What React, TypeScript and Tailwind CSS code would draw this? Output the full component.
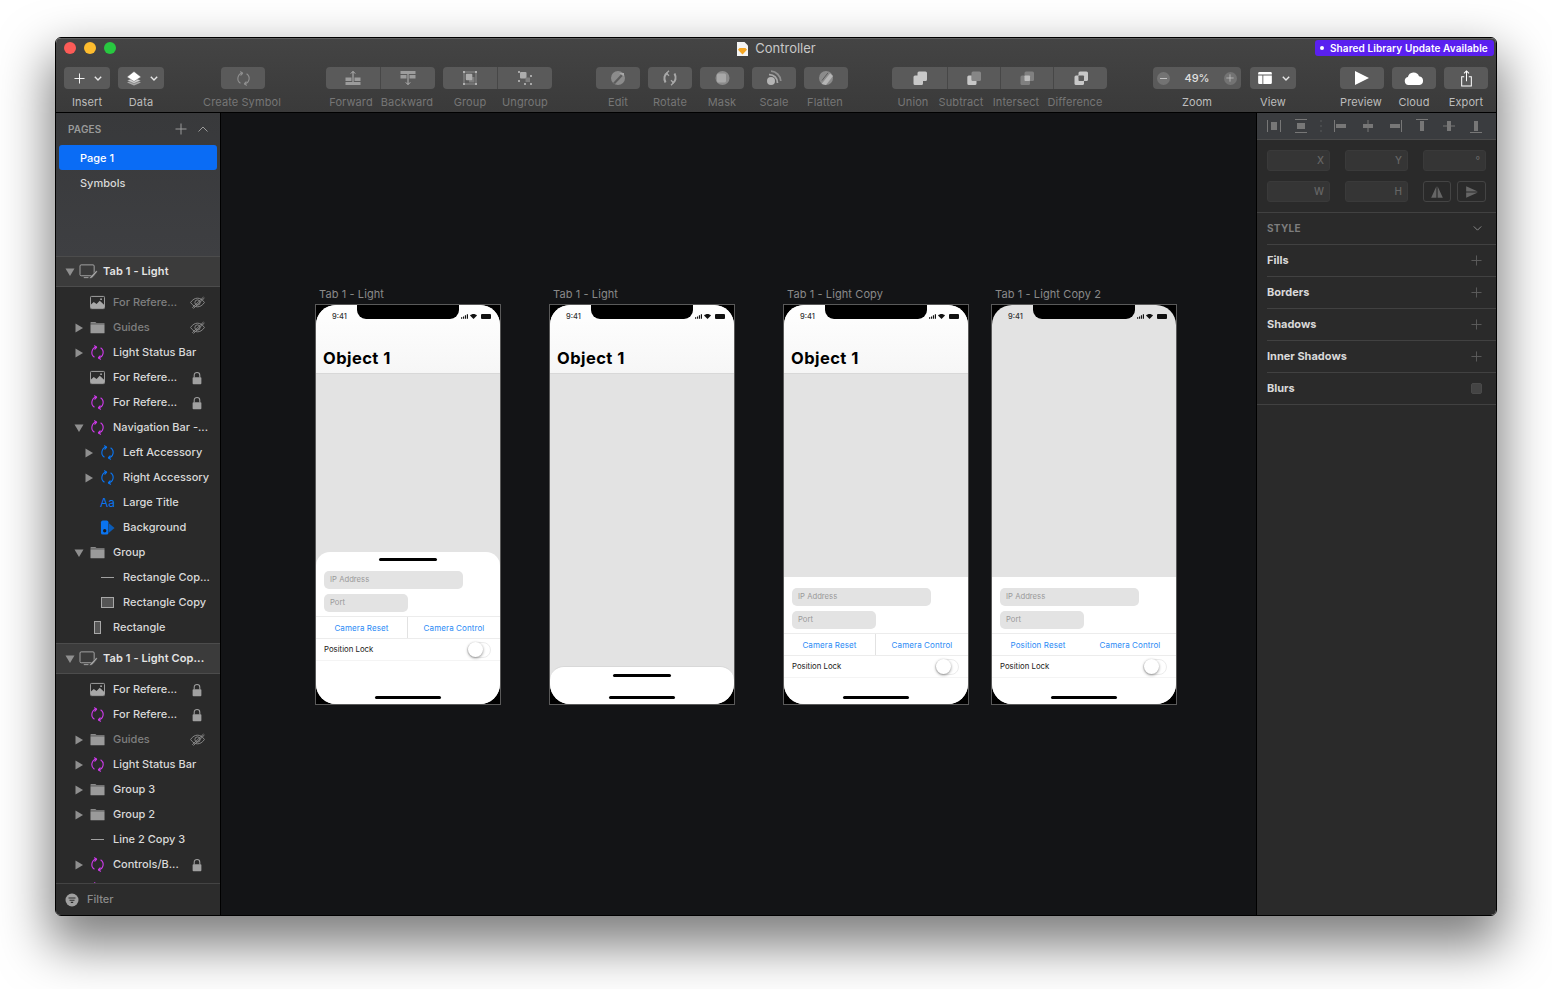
import type { ReactNode } from "react";

const font = { fontFamily: "Inter, 'Noto Sans', sans-serif" };

type IconProps = { className?: string };

const Svg = ({ className, children, box = "0 0 16 16" }: IconProps & { children: ReactNode; box?: string }) => (
  <svg viewBox={box} className={className} fill="none" stroke="none">
    {children}
  </svg>
);

/* layer list icons */
const SyncIcon = ({ className }: IconProps) => (
  <Svg className={className}>
    <g stroke="currentColor" strokeWidth="1.2" strokeLinecap="round" strokeLinejoin="round">
      <path d="M6.8 2.1A6 6 0 0 0 4.4 12.8" />
      <path d="M4.8.8 7 2.4 5.2 4.4" />
      <path d="M9.2 13.9A6 6 0 0 0 11.6 3.2" />
      <path d="M11.2 15.2 9 13.6 10.8 11.6" />
    </g>
  </Svg>
);
const ImageIcon = ({ className }: IconProps) => (
  <Svg className={className}>
    <rect x=".5" y="1.5" width="15" height="13" rx="1" fill="#2b2b2b" stroke="#a8a8a8" />
    <path d="M1 13.8V10l3-2.6 3 2.2 3.4-3.4L15 10.4v3.4z" fill="#a8a8a8" />
    <circle cx="11.8" cy="4.4" r="1" fill="#a8a8a8" />
  </Svg>
);
const FolderIcon = ({ className }: IconProps) => (
  <Svg className={className}>
    <path d="M.5 2.8c0-.5.3-.8.8-.8h4.4l1.2 1.2h8.3c.3 0 .3.2.3.4v.4H.5z" fill="#8a8a8a" />
    <path d="M.5 4.4h15v9.2c0 .4-.2.6-.6.6H1.1c-.4 0-.6-.2-.6-.6z" fill="#9a9a9a" />
  </Svg>
);
const EyeOffIcon = ({ className }: IconProps) => (
  <Svg className={className}>
    <g stroke="currentColor" strokeWidth="1">
      <path d="M.6 8C3 4.6 5.4 3.4 8 3.4s5 1.2 7.4 4.6C13 11.4 10.6 12.6 8 12.6S3 11.4.6 8z" />
      <circle cx="8" cy="8" r="2.8" />
      <path d="M2.4 13.6 14.4 2.2M3.6 14.4 15.4 3.2" />
    </g>
  </Svg>
);
const LockIcon = ({ className }: IconProps) => (
  <Svg className={className}>
    <path d="M4.8 7.5V4.8a3.2 3.2 0 0 1 6.4 0v2.7" stroke="#a0a0a0" strokeWidth="1.2" />
    <rect x="3" y="7" width="10" height="8" rx="1" fill="#a0a0a0" />
  </Svg>
);
const ArtboardIcon = ({ className }: IconProps) => (
  <Svg className={className} box="0 0 20 18">
    <rect x="1" y="2" width="15" height="11.5" rx="1.2" stroke="#a8a8a8" />
    <path d="M5 15.5h5" stroke="#a8a8a8" />
    <path d="M10.5 16c1-.4 1.3-2 2.4-2.6l5.3-5.4 1.3 1.2-4.8 5.500c-.7 1.3-2.4 1.8-4.200 1.300z" fill="#a8a8a8" stroke="#3b3b3b" strokeWidth=".6" />
  </Svg>
);
const ArrowRight = () => (
  <Svg className="h-[10px] w-[10px]" box="0 0 10 10">
    <path d="M1.5.5 9 5l-7.5 4.5z" fill="#8f8f8f" />
  </Svg>
);
const ArrowDown = () => (
  <Svg className="h-[10px] w-[10px]" box="0 0 10 10">
    <path d="M.5 1.5h9L5 9z" fill="#8f8f8f" />
  </Svg>
);
const BackgroundIcon = ({ className }: IconProps) => (
  <Svg className={className}>
    <path d="M9.5 3.5 15.5 8.5 9.5 13.5z" fill="#0b5cb8" />
    <rect x="1" y=".5" width="8" height="15" rx="2" fill="#0a74f0" />
    <circle cx="5" cy="11.5" r="1.8" fill="#1c1c1c" />
  </Svg>
);

const iconFor = (kind: string) => {
  const s = "h-[15px] w-[15px] shrink-0";
  switch (kind) {
    case "image":
      return <ImageIcon className={s} />;
    case "folder":
      return <FolderIcon className={s} />;
    case "symbol":
      return <SyncIcon className={`${s} text-[#cc3ae8]`} />;
    case "blue":
      return <SyncIcon className={`${s} text-[#0a74f0]`} />;
    case "text":
      return <span className="w-[15px] shrink-0 text-center text-[12px] leading-[15px] text-[#0a74f0]">Aa</span>;
    case "bg":
      return <BackgroundIcon className={s} />;
    case "line":
      return <span className="mx-[1px] h-[1px] w-[13px] shrink-0 self-center bg-[#a0a0a0]" />;
    case "rect":
      return <span className="mx-[1px] h-[11px] w-[13px] shrink-0 self-center border border-[#a8a8a8] bg-[#555]" />;
    case "tall":
      return <span className="mx-[4px] h-[13px] w-[7px] shrink-0 self-center border border-[#a8a8a8] bg-[#555]" />;
    default:
      return null;
  }
};

type Layer = { label: string; icon: string; depth?: number; arrow?: "r" | "d"; trail?: "eye" | "lock"; dim?: boolean };

const firstLayers: Layer[] = [
  { label: "For Refere...", icon: "image", trail: "eye", dim: true },
  { label: "Guides", icon: "folder", arrow: "r", trail: "eye", dim: true },
  { label: "Light Status Bar", icon: "symbol", arrow: "r" },
  { label: "For Refere...", icon: "image", trail: "lock" },
  { label: "For Refere...", icon: "symbol", trail: "lock" },
  { label: "Navigation Bar -...", icon: "symbol", arrow: "d" },
  { label: "Left Accessory", icon: "blue", depth: 1, arrow: "r" },
  { label: "Right Accessory", icon: "blue", depth: 1, arrow: "r" },
  { label: "Large Title", icon: "text", depth: 1 },
  { label: "Background", icon: "bg", depth: 1 },
  { label: "Group", icon: "folder", arrow: "d" },
  { label: "Rectangle Cop...", icon: "line", depth: 1 },
  { label: "Rectangle Copy", icon: "rect", depth: 1 },
  { label: "Rectangle", icon: "tall" },
];

const secondLayers: Layer[] = [
  { label: "For Refere...", icon: "image", trail: "lock" },
  { label: "For Refere...", icon: "symbol", trail: "lock" },
  { label: "Guides", icon: "folder", arrow: "r", trail: "eye", dim: true },
  { label: "Light Status Bar", icon: "symbol", arrow: "r" },
  { label: "Group 3", icon: "folder", arrow: "r" },
  { label: "Group 2", icon: "folder", arrow: "r" },
  { label: "Line 2 Copy 3", icon: "line" },
  { label: "Controls/B...", icon: "symbol", arrow: "r", trail: "lock" },
  { label: "", icon: "symbol", arrow: "r", trail: "lock" },
];

function LayerRow({ layer }: { layer: Layer }) {
  return (
    <div className="relative flex h-[25px] shrink-0 items-center">
      <div className={`flex w-[20px] justify-end ${layer.depth ? "ml-[24px]" : "ml-[14px]"}`}>
        <span className="mr-[6px] flex w-[10px]">
          {layer.arrow === "r" && <ArrowRight />}
          {layer.arrow === "d" && <ArrowDown />}
        </span>
      </div>
      <div className="flex w-[23px] shrink-0">{iconFor(layer.icon)}</div>
      <span className={`whitespace-nowrap text-[11px] font-medium ${layer.dim ? "text-[#7f7f7f]" : "text-[#d9d9d9]"}`}>
        {layer.label}
      </span>
      {layer.trail === "eye" && <EyeOffIcon className="absolute left-[134px] h-[15px] w-[15px] text-[#8a8a8a]" />}
      {layer.trail === "lock" && <LockIcon className="absolute left-[134px] h-[14px] w-[14px]" />}
    </div>
  );
}

function TabHeader({ label }: { label: string }) {
  return (
    <div className="flex h-[31px] shrink-0 items-center border-y border-[#4c4c4c] bg-[#3b3b3b] pl-[9px]">
      <ArrowDown />
      <ArtboardIcon className="ml-[4px] h-[17px] w-[19px]" />
      <span className="ml-[5px] whitespace-nowrap text-[11px] font-semibold tracking-[0.1px] text-[#e4e4e4]">{label}</span>
    </div>
  );
}

function Sidebar() {
  return (
    <aside className="flex w-[165px] shrink-0 flex-col border-r border-black bg-[#2a2a2a]">
      <div className="h-[143px] shrink-0 bg-gradient-to-b from-[#38393b] to-[#3e3f42] pt-[9px]">
        <div className="flex h-[14px] items-center justify-between px-[12px]">
          <span className="text-[10px] font-semibold tracking-[0.2px] text-[#9a9a9a]">PAGES</span>
          <div className="flex items-center gap-[11px]">
            <PlusIcon className="h-[12px] w-[12px] text-[#9a9a9a]" />
            <svg viewBox="0 0 10 6" className="h-[6px] w-[10px]" fill="none" stroke="#9a9a9a">
              <path d="M.5 5.5 5 1l4.500 4.500" />
            </svg>
          </div>
        </div>
        <div className="mx-[3px] mt-[9px] flex h-[25px] w-[158px] items-center rounded-[3px] bg-[#0a6cf5] pl-[21px] pt-[1px] text-[11px] font-medium text-white">
          Page 1
        </div>
        <div className="flex h-[25px] items-center pl-[24px] pt-[1px] text-[11px] font-medium text-[#d9d9d9]">Symbols</div>
      </div>
      <div className="flex min-h-0 flex-1 flex-col overflow-hidden">
        <TabHeader label="Tab 1 - Light" />
        <div className="flex flex-col pt-[3px]">
          {firstLayers.map((l, i) => (
            <LayerRow key={i} layer={l} />
          ))}
        </div>
        <div className="mt-[3px]">
          <TabHeader label="Tab 1 - Light Cop..." />
        </div>
        <div className="flex flex-col pt-[3px]">
          {secondLayers.map((l, i) => (
            <LayerRow key={i} layer={l} />
          ))}
        </div>
      </div>
      <div className="flex h-[32px] shrink-0 items-center border-t border-[#444] bg-[#2c2c2c] pl-[9px]">
        <svg viewBox="0 0 14 14" className="h-[14px] w-[14px]">
          <circle cx="7" cy="7" r="6.5" fill="#a0a0a0" />
          <path d="M3.5 5h7M4.5 7.2h5M5.8 9.4h2.4" stroke="#2c2c2c" strokeWidth="1.1" />
        </svg>
        <span className="ml-[8px] text-[11px] font-medium text-[#8a8a8a]">Filter</span>
      </div>
    </aside>
  );
}

/* toolbar icons */
const PlusIcon = ({ className }: IconProps) => (
  <Svg className={className} box="0 0 12 12">
    <path d="M6 .5v11M.5 6h11" stroke="currentColor" strokeWidth="1" />
  </Svg>
);
const Chevron = () => (
  <svg viewBox="0 0 8 5" className="h-[5px] w-[8px]" fill="none" stroke="#e6e6e6" strokeWidth="1.4">
    <path d="M.8.8 4 4 7.2.8" />
  </svg>
);
const g = "#9c9c9c";
const toolIcons: Record<string, ReactNode> = {
  data: (
    <>
      <path d="M8 9.5 15 12.5 8 15.5 1 12.5z" fill="#a8a8a8" />
      <path d="M8 7.5 15 10.5 8 13.5 1 10.5z" fill="#cfcfcf" stroke="#5c5c5c" strokeWidth=".5" />
      <path d="M8 1.5 15 7 8 11.5 1 7z" fill="#fff" stroke="#5c5c5c" strokeWidth=".5" />
    </>
  ),
  forward: (
    <>
      <path d="M.5 12h15v3H.5z" fill={g} />
      <path d="M.5 7.5h6V11h-6zM9.500 7.5h6V11h-6z" fill={g} />
      <path d="M8 12V1.5M5.8 3.6 8 1.400l2.200 2.200" stroke="#b5b5b5" />
    </>
  ),
  backward: (
    <>
      <path d="M.5 1h15v3H.5z" fill={g} />
      <path d="M.5 5h6v3.5h-6zM9.500 5h6v3.5h-6z" fill={g} />
      <path d="M8 4v10.5M5.8 12.4 8 14.6l2.200-2.200" stroke="#b5b5b5" />
    </>
  ),
  group: (
    <>
      <path d="M2 2h12v12H2z" stroke="#8c8c8c" />
      <path d="M1 1h2v2H1zM13 1h2v2h-2zM1 13h2v2H1zM13 13h2v2h-2z" fill="#b0b0b0" />
      <rect x="7" y="7" width="5.5" height="5.5" rx=".5" fill="#7d7d7d" />
      <rect x="3.8" y="3.8" width="6.5" height="6.5" rx="1" fill="#adadad" />
    </>
  ),
  ungroup: (
    <>
      <path d="M1 1h2v2H1zM13 5h2v2h-2zM1 10h2v2H1zM13 13h2v2h-2zM7 13h2v2H7z" fill="#a8a8a8" />
      <rect x="3" y="2" width="6.5" height="6.5" rx="1" fill="#adadad" />
      <rect x="8.5" y="7.5" width="4.5" height="4.5" rx=".5" fill="#7d7d7d" />
    </>
  ),
  edit: (
    <>
      <circle cx="8" cy="8" r="7" fill="#8b8b8b" />
      <path d="M3 13 11 4.5l1.600 1.500L5 14z" fill="#5c5c5c" />
      <path d="M9 3h5v3z" fill="#a8a8a8" />
    </>
  ),
  rotate: (
    <g stroke="#a8a8a8" strokeWidth="2" fill="none">
      <path d="M5.5 3C2.400 4.5 1.400 8.5 3.500 12.5" />
      <path d="M10.5 13c3.100-1.500 4.100-5.500 2-9.500" />
      <path d="M7 .8 4.500 3.200 7 5.700M9 15.200l2.500-2.400L9 10.300" strokeWidth="1.3" />
    </g>
  ),
  mask: (
    <>
      <circle cx="8.5" cy="8" r="7" fill="#8b8b8b" />
      <rect x="3" y="3.5" width="9" height="9" rx="1.5" fill="#a8a8a8" />
    </>
  ),
  scale: (
    <>
      <circle cx="5" cy="11" r="4" fill="#b5b5b5" />
      <path d="M3 4.600A8 8 0 0 1 11.500 13" stroke="#a8a8a8" strokeWidth="1.8" />
      <path d="M5 1.200A10.500 10.500 0 0 1 14.800 11" stroke="#8f8f8f" strokeWidth="1.8" />
    </>
  ),
  flatten: (
    <>
      <circle cx="8" cy="8" r="7" fill="#8b8b8b" />
      <path d="M3.500 14 12 3.500 15 6 8 15z" fill="#b5b5b5" />
      <path d="M4 10.500 10 2.800" stroke="#5c5c5c" />
    </>
  ),
  union: (
    <path d="M7 1.500h6.500A1.500 1.500 0 0 1 15 3v6.500A1.500 1.500 0 0 1 13.500 11H11v2.500A1.500 1.500 0 0 1 9.500 15H3a1.500 1.500 0 0 1-1.500-1.500V7A1.500 1.500 0 0 1 3 5.500h2.500V3A1.500 1.500 0 0 1 7 1.500z" fill="#c8c8c8" />
  ),
  subtract: (
    <>
      <rect x="5.5" y="1.5" width="9.5" height="9.5" rx="1.5" fill="#868686" />
      <path d="M2.800 5.500h2.700v4A1.500 1.500 0 0 0 7 11h3.500v2.500A1.500 1.500 0 0 1 9 15H2.800a1.500 1.500 0 0 1-1.500-1.500V7a1.500 1.500 0 0 1 1.500-1.500z" fill="#c8c8c8" />
    </>
  ),
  intersect: (
    <>
      <rect x="5.5" y="1.5" width="9.5" height="9.5" rx="1.5" fill="#808080" />
      <rect x="1.5" y="5.5" width="9.5" height="9.5" rx="1.5" fill="#808080" />
      <rect x="5.5" y="5.5" width="5.5" height="5.5" rx=".8" fill="#bdbdbd" />
    </>
  ),
  difference: (
    <>
      <rect x="5.5" y="1.5" width="9.5" height="9.5" rx="1.5" fill="#c8c8c8" />
      <rect x="1.5" y="5.5" width="9.5" height="9.5" rx="1.5" fill="#c8c8c8" />
      <rect x="5.5" y="5.5" width="5.5" height="5.5" rx=".8" fill="#5c5c5c" />
    </>
  ),
};

const ToolIcon = ({ name }: { name: string }) => (
  <svg viewBox="0 0 16 16" className="h-[16px] w-[16px]" fill="none">
    {toolIcons[name]}
  </svg>
);

const btn = "flex h-[22px] items-center justify-center bg-[#5a5a5a]";

function ToolbarButtons() {
  return (
    <div className="flex pl-[8px]">
      <div className={`${btn} w-[46px] gap-[9px] rounded-[4px] pl-[2px]`}>
        <PlusIcon className="h-[11px] w-[11px] text-white" />
        <Chevron />
      </div>
      <div className={`${btn} ml-[8px] w-[46px] gap-[8px] rounded-[4px] pl-[1px]`}>
        <ToolIcon name="data" />
        <Chevron />
      </div>
      <div className={`${btn} ml-[57px] w-[44px] rounded-[4px]`}>
        <SyncIcon className="h-[15px] w-[15px] text-[#8f8f8f]" />
      </div>
      <div className="ml-[61px] flex">
        <div className={`${btn} w-[55px] rounded-l-[4px] border-r border-[#474747]`}>
          <ToolIcon name="forward" />
        </div>
        <div className={`${btn} w-[54px] rounded-r-[4px]`}>
          <ToolIcon name="backward" />
        </div>
      </div>
      <div className="ml-[8px] flex">
        <div className={`${btn} w-[55px] rounded-l-[4px] border-r border-[#474747]`}>
          <ToolIcon name="group" />
        </div>
        <div className={`${btn} w-[54px] rounded-r-[4px]`}>
          <ToolIcon name="ungroup" />
        </div>
      </div>
      <div className="ml-[44px] flex gap-[8px]">
        {["edit", "rotate", "mask", "scale", "flatten"].map((n) => (
          <div key={n} className={`${btn} w-[44px] rounded-[4px]`}>
            <ToolIcon name={n} />
          </div>
        ))}
      </div>
      <div className="ml-[44px] flex">
        <div className={`${btn} w-[56px] rounded-l-[4px] border-r border-[#474747]`}>
          <ToolIcon name="union" />
        </div>
        <div className={`${btn} w-[53px] border-r border-[#474747]`}>
          <ToolIcon name="subtract" />
        </div>
        <div className={`${btn} w-[53px] border-r border-[#474747]`}>
          <ToolIcon name="intersect" />
        </div>
        <div className={`${btn} w-[53px] rounded-r-[4px]`}>
          <ToolIcon name="difference" />
        </div>
      </div>
      <div className="ml-[46px] flex h-[22px] w-[88px] items-center justify-between rounded-[4px] bg-[#5a5a5a] px-[4px]">
        <span className="flex h-[13px] w-[13px] items-center justify-center rounded-full bg-[#737373]">
          <span className="h-[1px] w-[7px] bg-[#c0c0c0]" />
        </span>
        <span className="text-[11px] font-medium text-[#e0e0e0]">49%</span>
        <span className="flex h-[13px] w-[13px] items-center justify-center rounded-full bg-[#737373]">
          <PlusIcon className="h-[8px] w-[8px] text-[#d0d0d0]" />
        </span>
      </div>
      <div className={`${btn} ml-[9px] w-[46px] gap-[9px] rounded-[4px]`}>
        <svg viewBox="0 0 16 14" className="h-[12px] w-[16px]">
          <path d="M0 1.500A1.500 1.500 0 0 1 1.500 0h13A1.500 1.500 0 0 1 16 1.500V3H0z" fill="#fff" />
          <path d="M0 4h5v10H1.500A1.500 1.500 0 0 1 0 12.500zM6 4h10v8.500a1.500 1.500 0 0 1-1.500 1.500H6z" fill="#fff" />
        </svg>
        <Chevron />
      </div>
      <div className={`${btn} ml-[44px] w-[44px] rounded-[4px]`}>
        <svg viewBox="0 0 14 14" className="h-[14px] w-[14px]">
          <path d="M0 0 14 7 0 14z" fill="#fff" />
        </svg>
      </div>
      <div className={`${btn} ml-[8px] w-[44px] rounded-[4px]`}>
        <svg viewBox="0 0 20 13" className="h-[13px] w-[20px]">
          <path d="M4.500 13a4 4 0 0 1-.6-7.900A5.800 5.800 0 0 1 15 4.300 4.400 4.400 0 0 1 15.500 13z" fill="#fff" />
        </svg>
      </div>
      <div className={`${btn} ml-[8px] w-[44px] rounded-[4px]`}>
        <svg viewBox="0 0 14 18" className="h-[17px] w-[13px]" fill="none" stroke="#fff" strokeWidth="1.1">
          <path d="M4.500 7H1.800v10h10.400V7H9.500" />
          <path d="M7 12V1M4.300 3.500 7 .8l2.700 2.700" />
        </svg>
      </div>
    </div>
  );
}

const toolLabels = [
  { t: "Insert", m: "ml-[11px]", on: true },
  { t: "Data", m: "ml-[14px]", on: true },
  { t: "Create Symbol", m: "ml-[61px]" },
  { t: "Forward", m: "ml-[69px]" },
  { t: "Backward", m: "ml-[16px]" },
  { t: "Group", m: "ml-[23px]" },
  { t: "Ungroup", m: "ml-[15px]" },
  { t: "Edit", m: "ml-[53px]" },
  { t: "Rotate", m: "ml-[12px]" },
  { t: "Mask", m: "ml-[12px]" },
  { t: "Scale", m: "ml-[12px]" },
  { t: "Flatten", m: "ml-[11px]" },
  { t: "Union", m: "ml-[48px]" },
  { t: "Subtract", m: "ml-[8px]" },
  { t: "Intersect", m: "ml-[15px]" },
  { t: "Difference", m: "ml-[19px]" },
  { t: "Zoom", m: "ml-[82px]", on: true },
  { t: "View", m: "ml-[36px]", on: true },
  { t: "Preview", m: "ml-[48px]", on: true },
  { t: "Cloud", m: "ml-[13px]", on: true },
  { t: "Export", m: "ml-[12px]", on: true },
];

function Toolbar() {
  return (
    <header className="h-[75px] shrink-0 border-y border-b-black border-t-[#5f5f5f] bg-gradient-to-b from-[#444444] to-[#3a3a3a]">
      <div className="grid h-[28px] grid-cols-[1fr_auto_1fr] items-start">
        <div className="flex gap-[8px] pl-[8px] pt-[3px]">
          <span className="h-[12px] w-[12px] rounded-full bg-[#fc5b57]" />
          <span className="h-[12px] w-[12px] rounded-full bg-[#fdbc2e]" />
          <span className="h-[12px] w-[12px] rounded-full bg-[#28c840]" />
        </div>
        <div className="flex items-center gap-[7px] pl-[1px]">
          <svg viewBox="0 0 11 14" className="h-[14px] w-[11px]">
            <path d="M0 0h7.500L11 3.500V14H0z" fill="#f4f4f4" />
            <path d="M2.500 6h6L10 7.800 5.500 12.500 1 7.800z" fill="#f5a623" />
          </svg>
          <span className="text-[13px] text-[#c8c8c8]">Controller</span>
        </div>
        <div className="flex justify-end pr-[2px] pt-[1px]">
          <div className="flex h-[16px] w-[179px] items-center rounded-[3px] bg-[#5a20f0] pl-[5px] text-[10px] font-semibold tracking-[0.1px] text-white">
            <span className="mr-[6px] h-[4px] w-[4px] rounded-full bg-white" />
            Shared Library Update Available
          </div>
        </div>
      </div>
      <ToolbarButtons />
      <div className="mt-[5px] flex">
        {toolLabels.map((l) => (
          <div key={l.t} className={`flex w-[40px] justify-center whitespace-nowrap text-[11px] tracking-[0.1px] ${l.m} ${l.on ? "text-[#bdbdbd]" : "text-[#767676]"}`}>
            {l.t}
          </div>
        ))}
      </div>
    </header>
  );
}

/* artboards */
function StatusRow() {
  return (
    <div className="grid h-[23px] shrink-0 grid-cols-[41px_102px_1fr] items-center">
      <span className="pl-[16px] text-[7.5px] font-medium text-[#333]">9:41</span>
      <span className="h-[14px] self-start rounded-b-[9px] bg-black" />
      <div className="flex items-center gap-[2px] pl-[2px]">
        <svg viewBox="0 0 9 6" className="h-[5px] w-[7px]">
          <path d="M0 4h1.500v2H0zM2.500 3H4v3H2.500zM5 1.500h1.500V6H5zM7.500 0H9v6H7.500z" fill="#111" />
        </svg>
        <svg viewBox="0 0 10 7" className="h-[5px] w-[7px]">
          <path d="M5 7 0 2.200C2.800-.7 7.200-.7 10 2.200z" fill="#111" />
        </svg>
        <span className="ml-[2px] h-[5px] w-[10px] rounded-[1px] bg-[#111]" />
      </div>
    </div>
  );
}

type PhoneProps = { title: string; sheet: "handle" | "flat" | "peek"; left: string; divider?: boolean; tight?: boolean; bare?: boolean };

function SheetContent({ left, divider }: { left: string; divider?: boolean }) {
  return (
    <>
      <div className="ml-[8px] flex h-[18px] w-[139px] items-center rounded-[5px] bg-[#e3e3e3] pl-[6px] text-[7.7px] text-[#9a9a9a]">IP Address</div>
      <div className="ml-[8px] mt-[5px] flex h-[18px] w-[84px] items-center rounded-[5px] bg-[#e3e3e3] pl-[6px] text-[7.7px] text-[#9a9a9a]">Port</div>
      <div className="mt-[4px] flex h-[23px] border-y border-[#ececec] text-[8px] tracking-[0.1px] text-[#2a8af5]">
        <div className={`flex w-[92px] items-center justify-center ${divider ? "border-r border-[#e2e2e2]" : ""}`}>{left}</div>
        <div className="flex flex-1 items-center justify-center">Camera Control</div>
      </div>
      <div className="flex h-[22px] items-center justify-between border-b border-[#f4f4f4] pl-[8px] pr-[9px] text-[7.8px] text-[#222]">
        Position Lock
        <span className="flex h-[16px] w-[24px] items-center rounded-full border border-[#ececec] bg-white">
          <span className="h-[15px] w-[15px] rounded-full bg-white shadow-[0_1px_3px_rgba(0,0,0,0.45)]" />
        </span>
      </div>
    </>
  );
}

function Phone({ title, sheet, left, divider, tight, bare }: PhoneProps) {
  const home = <span className="mx-auto mb-[5px] mt-auto h-[3px] w-[66px] shrink-0 rounded-full bg-black" />;
  return (
    <div className={`flex flex-col ${tight ? "mr-[22px]" : "mr-[48px]"}`}>
      <div className="mb-[3px] ml-[4px] h-[14px] whitespace-nowrap text-[11px] leading-[14px] tracking-[0.1px] text-[#8a8a8a]">{title}</div>
      <div className="h-[401px] w-[186px] border border-[#5a5a5a] bg-black">
        <div className="flex h-full flex-col overflow-hidden rounded-[20px] bg-[#e3e3e3]">
          {bare ? (
            <StatusRow />
          ) : (
            <div className="h-[69px] shrink-0 border-b border-[#d8d8d8] bg-gradient-to-b from-white to-[#f6f6f6]">
              <StatusRow />
              <div className="mt-[20px] pl-[7px] text-[16.5px] font-bold leading-[20px] tracking-[0.45px] text-black">Object 1</div>
            </div>
          )}
          <div className="flex-1" />
          {sheet === "handle" && (
            <div className="flex h-[152px] shrink-0 flex-col rounded-t-[14px] bg-white">
              <span className="mx-auto mb-[10px] mt-[6px] h-[3px] w-[58px] shrink-0 rounded-full bg-black" />
              <SheetContent left={left} divider={divider} />
              {home}
            </div>
          )}
          {sheet === "flat" && (
            <div className="flex h-[127px] shrink-0 flex-col bg-white pt-[11px]">
              <SheetContent left={left} divider={divider} />
              {home}
            </div>
          )}
          {sheet === "peek" && (
            <div className="flex h-[38px] shrink-0 flex-col rounded-t-[14px] border-t border-[#d8d8d8] bg-white">
              <span className="mx-auto mt-[7px] h-[3px] w-[58px] shrink-0 rounded-full bg-black" />
              {home}
            </div>
          )}
        </div>
      </div>
    </div>
  );
}

/* inspector */
const alignIcons = [
  { m: "", d: "M.5 1v12M13.500 1v12", r: "M4 3h6v8H4z" },
  { m: "ml-[13px]", d: "M1 .5h12M1 13.500h12", r: "M3 4h8v6H3z" },
  { m: "ml-[6px]", d: "", r: "M6.500 1.500h1v1h-1zM6.500 6.500h1v1h-1zM6.500 11.500h1v1h-1z" },
  { m: "ml-[6px]", d: "M.5 1v12", r: "M2 5h10v4H2z" },
  { m: "ml-[13px]", d: "M7 1v12", r: "M2 5h10v4H2z" },
  { m: "ml-[13px]", d: "M13.500 1v12", r: "M2 5h10v4H2z" },
  { m: "ml-[13px]", d: "M1 .5h12", r: "M5 2h4v10H5z" },
  { m: "ml-[13px]", d: "M1 7h12", r: "M5 2h4v10H5z" },
  { m: "ml-[13px]", d: "M1 13.500h12", r: "M5 2h4v10H5z" },
];

const field = "flex h-[21px] w-[63px] items-center justify-end rounded-[3px] border border-[#3a3a3a] bg-[#353535] pr-[5px] text-[10px] font-medium text-[#666]";

function Inspector() {
  return (
    <aside className="flex w-[240px] shrink-0 flex-col border-l border-black bg-[#2a2a2a]">
      <div className="flex h-[27px] shrink-0 items-center border-b border-[#4a4a4a] bg-[#3a3c3f] pl-[10px]">
        {alignIcons.map((a, i) => (
          <svg key={i} viewBox="0 0 14 14" className={`h-[14px] w-[14px] ${a.m}`} fill="none">
            <path d={a.r} fill="#777" />
            {a.d && <path d={a.d} stroke="#777" />}
          </svg>
        ))}
      </div>
      <div className="flex h-[73px] shrink-0 flex-col gap-[10px] border-b border-[#414141] pl-[10px] pt-[10px]">
        <div className="flex gap-[15px]">
          <div className={field}>X</div>
          <div className={field}>Y</div>
          <div className={field}>°</div>
        </div>
        <div className="flex gap-[15px]">
          <div className={field}>W</div>
          <div className={field}>H</div>
          <div className="flex gap-[6px]">
            <div className="flex h-[21px] w-[28px] items-center justify-center rounded-[3px] border border-[#444]">
              <svg viewBox="0 0 12 12" className="h-[14px] w-[14px]">
                <path d="M5.500 1v10H1zM6.500 1v10H11z" fill="#666" />
              </svg>
            </div>
            <div className="flex h-[21px] w-[29px] items-center justify-center rounded-[3px] border border-[#444]">
              <svg viewBox="0 0 12 12" className="h-[14px] w-[14px]">
                <path d="M1 1l10 4.500H1zM1 6.500h10L1 11z" fill="#666" />
              </svg>
            </div>
          </div>
        </div>
      </div>
      <div className="ml-[10px] flex h-[32px] shrink-0 items-center justify-between border-b border-[#414141] pr-[14px]">
        <span className="text-[10px] font-bold tracking-[0.3px] text-[#7d7d7d]">STYLE</span>
        <svg viewBox="0 0 10 6" className="h-[5px] w-[9px]" fill="none" stroke="#999">
          <path d="M.5.5 5 5 9.500.5" />
        </svg>
      </div>
      {["Fills", "Borders", "Shadows", "Inner Shadows"].map((t) => (
        <div key={t} className="ml-[10px] flex h-[32px] shrink-0 items-center justify-between border-b border-[#414141] pr-[14px]">
          <span className="text-[11px] font-bold text-[#d9d9d9]">{t}</span>
          <PlusIcon className="h-[11px] w-[11px] text-[#5e5e5e]" />
        </div>
      ))}
      <div className="flex h-[32px] shrink-0 items-center justify-between border-b border-[#414141] pl-[10px] pr-[14px]">
        <span className="text-[11px] font-bold text-[#d9d9d9]">Blurs</span>
        <span className="h-[11px] w-[11px] rounded-[2px] border border-[#4a4a4a] bg-[#444]" />
      </div>
    </aside>
  );
}

export default function App() {
  return (
    <div className="h-[989px] overflow-hidden bg-white pl-[55px] pt-[37px]" style={font}>
      <div className="flex h-[879px] w-[1442px] flex-col overflow-hidden rounded-[6px] border border-black shadow-[0_24px_50px_6px_rgba(0,0,0,0.5)]">
        <Toolbar />
        <div className="flex min-h-0 flex-1">
          <Sidebar />
          <main className="flex min-w-0 flex-1 bg-[#131416] pl-[94px] pt-[174px]">
            <Phone title="Tab 1 - Light" sheet="handle" left="Camera Reset" divider />
            <Phone title="Tab 1 - Light" sheet="peek" left="" />
            <Phone title="Tab 1 - Light Copy" sheet="flat" left="Camera Reset" divider tight />
            <Phone title="Tab 1 - Light Copy 2" sheet="flat" left="Position Reset" bare />
          </main>
          <Inspector />
        </div>
      </div>
    </div>
  );
}
